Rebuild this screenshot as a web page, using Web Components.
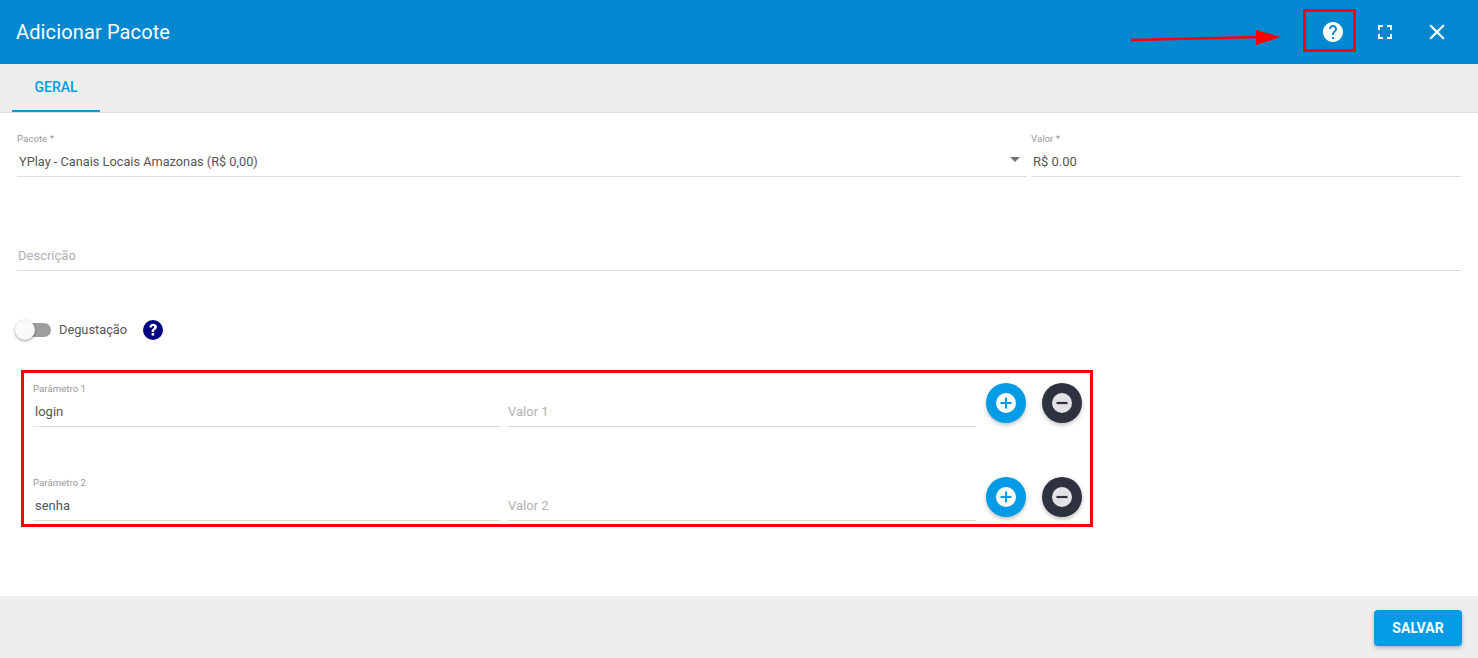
<!DOCTYPE html>
<html><head><meta charset="utf-8">
<style>
html,body{margin:0;height:658px;overflow:hidden;background:#fff;font-family:Roboto,"Liberation Sans",sans-serif}
</style></head><body>
<app-dialog>
  <span slot="title">Adicionar Pacote</span>
  <div slot="tabs"><tab-item>GERAL</tab-item></div>
  <div style="display:flex;flex-direction:column;padding:16px 17px 0 17px">
    <div style="display:flex;gap:4px;height:94px">
      <form-field label="Pacote *" value="YPlay - Canais Locais Amazonas (R$ 0,00)" select style="width:1010px"></form-field>
      <form-field label="Valor *" value="R$ 0.00" style="flex:1"></form-field>
    </div>
    <div style="height:94px"><form-field placeholder="Descrição"></form-field></div>
    <toggle-row label="Degustação"></toggle-row>
    <param-group>
      <param-row n="1" value="login"></param-row>
      <param-row n="2" value="senha"></param-row>
    </param-group>
  </div>
  <app-button slot="footer">SALVAR</app-button>
</app-dialog>
<script>
function def(name, html){
  customElements.define(name, class extends HTMLElement{
    connectedCallback(){
      if(this.shadowRoot) return;
      const r=this.attachShadow({mode:'open'});
      r.innerHTML=typeof html==='function'?html(this):html;
    }
  });
}
def('app-dialog',`<style>
:host{display:flex;flex-direction:column;height:658px;position:relative;color:#3c3c3c;overflow:hidden}
header{height:64px;flex:none;background:#0288d1;color:#fff;display:flex;align-items:center;padding:0 16px;font-size:20px;font-weight:400;letter-spacing:.13px}
.t{flex:1}
.ib{width:52px;height:52px;display:flex;align-items:center;justify-content:center}
.icons{display:flex;margin-right:-1px}
nav{height:48px;flex:none;background:#eee;border-bottom:1px solid #ddd;padding-left:12px}
main{flex:1;min-height:0;background:#fff}
footer{height:62px;flex:none;box-sizing:border-box;padding-top:2px;background:#eee;display:flex;justify-content:flex-end;align-items:center;padding-right:16px}
.ann{position:absolute;pointer-events:none}
.box{left:1303px;top:9px;width:47px;height:37px;border:3px solid #f00;}
.arrow{left:1120px;top:20px}
</style>
<header><div class="t"><slot name="title"></slot></div>
<div class="icons">
<div class="ib"><svg width="24" height="24" viewBox="0 0 24 24" fill="#fff"><path d="M12 2C6.48 2 2 6.48 2 12s4.48 10 10 10 10-4.48 10-10S17.52 2 12 2zm1 17h-2v-2h2v2zm2.07-7.75l-.9.92C13.45 12.9 13 13.5 13 15h-2v-.5c0-1.1.45-2.1 1.17-2.83l1.24-1.26c.37-.36.59-.86.59-1.41 0-1.1-.9-2-2-2s-2 .9-2 2H8c0-2.21 1.79-4 4-4s4 1.79 4 4c0 .88-.36 1.68-.93 2.25z"/></svg></div>
<div class="ib"><svg width="24" height="24" viewBox="0 0 24 24" fill="#fff"><path d="M7 14H5v5h5v-2H7v-3zm-2-4h2V7h3V5H5v5zm12 7h-3v2h5v-5h-2v3zM14 5v2h3v3h2V5h-5z"/></svg></div>
<div class="ib"><svg width="26" height="26" viewBox="0 0 24 24" fill="#fff"><path d="M19 6.41L17.59 5 12 10.59 6.41 5 5 6.41 10.59 12 5 17.59 6.41 19 12 13.41 17.59 19 19 17.59 13.41 12z"/></svg></div>
</div></header>
<nav><slot name="tabs"></slot></nav>
<main><slot></slot></main>
<footer><slot name="footer"></slot></footer>
<div class="ann box"></div>
<svg class="ann arrow" width="170" height="36" viewBox="0 0 170 36"><path d="M11 20L140 17" stroke="#f00" stroke-width="2.5" fill="none"/><path d="M136 10L161 17L136 25z" fill="#f00"/></svg>`);
def('tab-item',`<style>:host{display:inline-flex;align-items:center;justify-content:center;width:88px;height:46px;border-bottom:2px solid #039be5;color:#039be5;font-size:14px;font-weight:500}</style><slot></slot>`);
def('form-field',h=>{
 const l=h.getAttribute('label'),v=h.getAttribute('value'),p=h.getAttribute('placeholder');
 return `<style>:host{display:block;height:47px;border-bottom:1px solid #ddd;box-sizing:content-box;position:relative;font-size:13px}
.l{height:18px;padding-top:3px;box-sizing:border-box;font-size:9.7px;line-height:14px;color:#999}
.v{height:29px;display:flex;align-items:center;padding-left:2px;color:#555}
.s{font-size:12.75px}
.p{padding-left:1px;color:#b0b0b0}
.c{position:absolute;right:7px;top:28px;width:0;height:0;border:5px solid transparent;border-top-color:#757575;border-bottom:0}
</style><div class="l">${l||''}</div><div class="v ${p?'p':''} ${h.hasAttribute('select')?'s':''}">${v||p||''}</div>${h.hasAttribute('select')?'<div class="c"></div>':''}`;
});
def('toggle-row',h=>`<style>:host{display:flex;align-items:center;height:41px;margin-top:-8px;font-size:12.8px;color:#555}
.tr{width:34px;height:14px;border-radius:7px;background:#9e9e9e;position:relative;margin-right:8px}
.th{position:absolute;left:-2px;top:-3px;width:20px;height:20px;border-radius:50%;background:#fafafa;box-shadow:0 1px 3px rgba(0,0,0,.4)}
.q{margin-left:16px;width:20px;height:20px;display:flex}
</style><div class="tr"><div class="th"></div></div><span>${h.getAttribute('label')}</span>
<div class="q"><svg width="20" height="20" viewBox="0 0 20 20"><circle cx="10" cy="10" r="10" fill="#000080"/><path d="M6.4 7.4c.1-2.3 1.7-3.6 3.8-3.6 2.2 0 3.7 1.3 3.7 3.1 0 1.3-.7 2-1.6 2.7-.9.6-1.2 1-1.2 1.9v.4H8.6v-.6c0-1.3.5-1.9 1.4-2.6.7-.5 1.1-.9 1.1-1.6 0-.7-.5-1.1-1.1-1.1-.7 0-1.2.5-1.2 1.5z" fill="#fff"/><rect x="8.6" y="13" width="2.6" height="2.6" fill="#fff"/></svg></div>`);
def('param-group',`<style>:host{display:block;margin:20px 0 0 4px;width:1072px;height:157px;box-sizing:border-box;border:3px solid #f00;padding:0 0 0 9px}</style><slot></slot>`);
def('param-row',h=>{const n=h.getAttribute('n');
 return `<style>:host{display:flex;height:94px;font-size:13px}
.f{flex:none;width:468px;margin:6px 6px 0 0}
.f2{width:469px;margin-right:10px}
.b{flex:none;width:40px;height:40px;border-radius:50%;margin:10px 16px 0 0;display:flex;align-items:center;justify-content:center;box-shadow:0 2px 4px rgba(0,0,0,.25)}
.a{background:#039be5}.m{background:#2d323e}
</style>
<form-field class="f" label="Parâmetro ${n}" value="${h.getAttribute('value')}"></form-field>
<form-field class="f f2" placeholder="Valor ${n}"></form-field>
<div class="b a"><svg width="20" height="20" viewBox="0 0 20 20"><circle cx="10" cy="10" r="10" fill="#fff"/><path d="M10 4.5v11M4.5 10h11" stroke="#039be5" stroke-width="2"/></svg></div>
<div class="b m"><svg width="20" height="20" viewBox="0 0 20 20"><circle cx="10" cy="10" r="10" fill="#e3e3e6"/><path d="M4.5 10h11" stroke="#2d323e" stroke-width="2.2"/></svg></div>`;});
def('app-button',`<style>:host{display:flex;align-items:center;justify-content:center;width:88px;height:36px;background:#039be5;color:#fff;border-radius:4px;font-size:14px;font-weight:700;box-shadow:0 2px 4px rgba(0,0,0,.25)}</style><slot></slot>`);
</script>
</body></html>
